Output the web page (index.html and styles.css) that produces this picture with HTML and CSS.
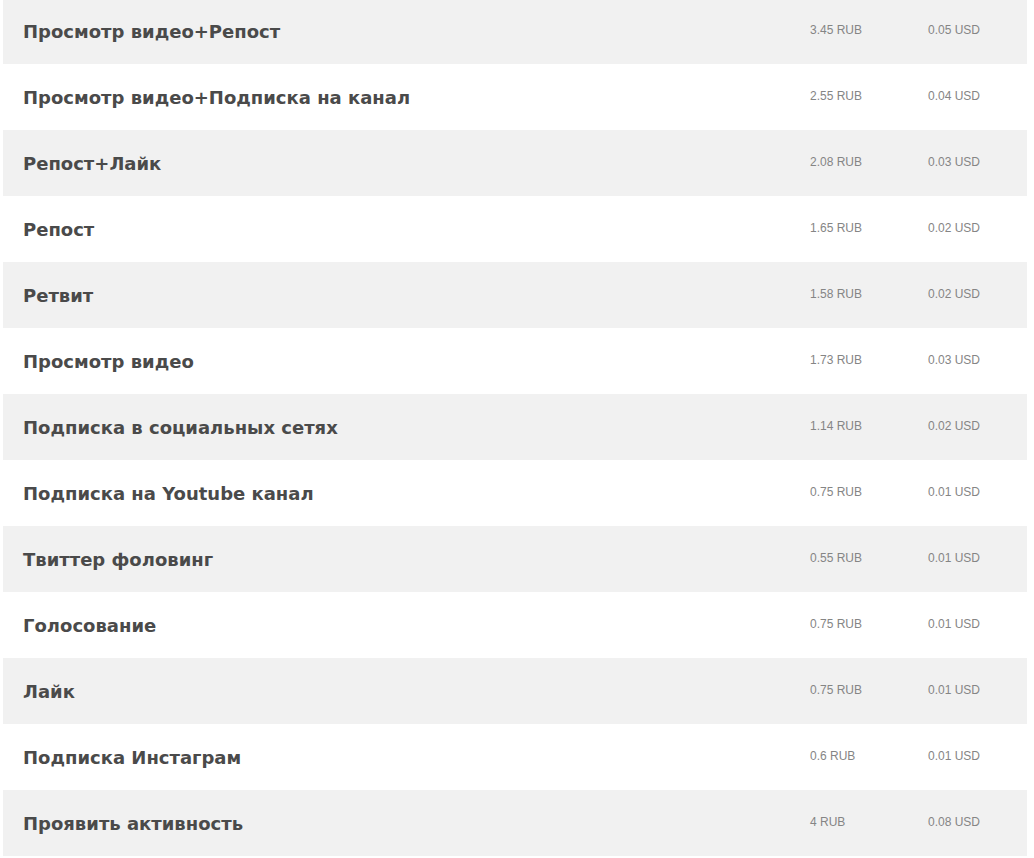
FILE: index.html
```html
<!DOCTYPE html>
<html lang="ru">
<head>
<meta charset="utf-8">
<link rel="stylesheet" href="styles.css">
</head>
<body>
<div class="list">
  <div class="row"><div class="name">Просмотр видео+Репост</div><div class="rub">3.45 RUB</div><div class="usd">0.05 USD</div></div>
  <div class="row"><div class="name">Просмотр видео+Подписка на канал</div><div class="rub">2.55 RUB</div><div class="usd">0.04 USD</div></div>
  <div class="row"><div class="name">Репост+Лайк</div><div class="rub">2.08 RUB</div><div class="usd">0.03 USD</div></div>
  <div class="row"><div class="name">Репост</div><div class="rub">1.65 RUB</div><div class="usd">0.02 USD</div></div>
  <div class="row"><div class="name">Ретвит</div><div class="rub">1.58 RUB</div><div class="usd">0.02 USD</div></div>
  <div class="row"><div class="name">Просмотр видео</div><div class="rub">1.73 RUB</div><div class="usd">0.03 USD</div></div>
  <div class="row"><div class="name">Подписка в социальных сетях</div><div class="rub">1.14 RUB</div><div class="usd">0.02 USD</div></div>
  <div class="row"><div class="name">Подписка на Youtube канал</div><div class="rub">0.75 RUB</div><div class="usd">0.01 USD</div></div>
  <div class="row"><div class="name">Твиттер фоловинг</div><div class="rub">0.55 RUB</div><div class="usd">0.01 USD</div></div>
  <div class="row"><div class="name">Голосование</div><div class="rub">0.75 RUB</div><div class="usd">0.01 USD</div></div>
  <div class="row"><div class="name">Лайк</div><div class="rub">0.75 RUB</div><div class="usd">0.01 USD</div></div>
  <div class="row"><div class="name">Подписка Инстаграм</div><div class="rub">0.6 RUB</div><div class="usd">0.01 USD</div></div>
  <div class="row"><div class="name">Проявить активность</div><div class="rub">4 RUB</div><div class="usd">0.08 USD</div></div>
</div>
</body>
</html>
```
FILE: styles.css
```css
html, body {
  margin: 0;
  padding: 0;
  background: #ffffff;
}
.list {
  margin: -2px 0 0 3px;
  width: 1024px;
}
.row {
  display: grid;
  grid-template-columns: 807px 118px 99px;
  align-items: center;
  height: 66px;
}
.row:nth-child(odd) {
  background: #f1f1f1;
}
.name {
  padding-left: 20px;
  font-family: "DejaVu Sans", Verdana, sans-serif;
  font-weight: bold;
  font-size: 18px;
  color: #4a4a4a;
}
.rub, .usd {
  padding-bottom: 2px;
  font-family: "Liberation Sans", Arial, sans-serif;
  font-size: 12px;
  color: #858585;
}
```
